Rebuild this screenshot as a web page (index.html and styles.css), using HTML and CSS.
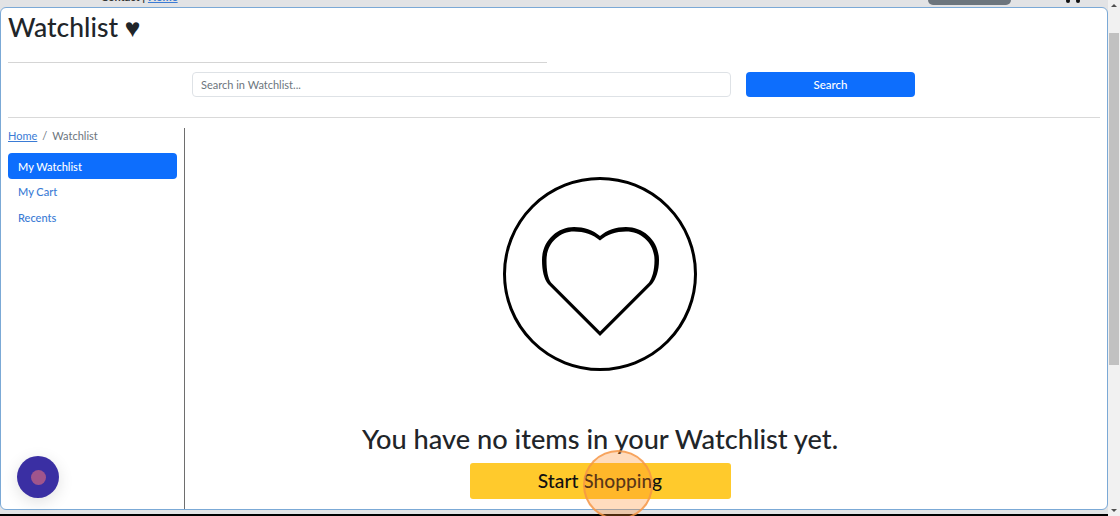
FILE: index.html
```html
<!DOCTYPE html>
<html>
  <head>
    <title>Watchlist</title>
    <link rel="stylesheet" href="styles.css">
  </head>

  <body>
    <div class="window">
      <div class="content">
        <div class="topstrip">
          <div class="contact">Contact | <a href="#">Home</a></div>
          <div class="pill"></div>
          <div class="dots"><span></span><span></span></div>
        </div>

        <div class="frame">
          <h1>Watchlist ♥</h1>
          <div class="title-line"></div>

          <form class="search-row">
            <input type="text" class="search-input" placeholder="Search in Watchlist...">
            <button type="button" class="search-btn">Search</button>
          </form>
          <hr class="divider">

          <div class="columns">
            <aside class="sidebar">
              <div class="breadcrumb">
                <a href="#">Home</a><span class="sep">/</span><span>Watchlist</span>
              </div>
              <nav class="side-nav">
                <a href="#" class="active">My Watchlist</a>
                <a href="#">My Cart</a>
                <a href="#">Recents</a>
              </nav>
            </aside>

            <main class="empty">
              <svg class="empty-icon" width="196" height="196" viewBox="0 0 196 196">
                <circle cx="98" cy="98" r="95.5" fill="none" stroke="#000" stroke-width="3"/>
                <path fill="#000" fill-rule="evenodd" d="M98 160 L46 108 C42 103 40 95 40 84 C40 65 55 51 72 51 C82 51 91 54 98 60 C105 54 114 51 124 51 C142 51 157 65 157 84 C157 95 154 103 150 108 Z M98 155.500 L49 106.500 C46 102 44.500 95 44.500 84 C44.500 68 57 55.500 72 55.500 C82 55.500 91 58.500 98 64.500 C105 58.500 114 55.500 124 55.500 C140 55.500 152.500 68 152.500 84 C152.500 95 150 102 147 106.500 Z"/>
              </svg>
              <h2>You have no items in your Watchlist yet.</h2>
              <button type="button" class="shop-btn">Start Shopping</button>
            </main>
          </div>
        </div>

        <div class="bottom-bar"></div>
      </div>

      <div class="scrollbar">
        <div class="arrow-up"></div>
        <div class="thumb"></div>
        <div class="arrow-down"></div>
      </div>
    </div>

    <div class="chat-bubble"><span></span></div>
    <div class="click-mark"></div>
  </body>
</html>
```

FILE: styles.css
```css
* {
  box-sizing: border-box;
}

html,
body {
  height: 516px;
  margin: 0;
  overflow: hidden;
}

body {
  font-family: Lato, "Open Sans", sans-serif;
  color: #212529;
  background: #fff;
}

a {
  color: #3a7bd5;
}

.window {
  display: flex;
  height: 516px;
}

.content {
  display: flex;
  flex-direction: column;
  width: 1108px;
  background: #e2e3e5;
}

/* page behind the frame, only its bottom edge shows */
.topstrip {
  display: flex;
  align-items: flex-end;
  flex: 0 0 7px;
  height: 7px;
  overflow: hidden;
  font-size: 11px;
  font-weight: 700;
  line-height: 14px;
  color: #333;
}

.contact {
  width: 73px;
  margin-left: 101px;
  margin-bottom: 3px;
  white-space: nowrap;
}

.pill {
  width: 83px;
  height: 12px;
  margin-left: 754px;
  background: #6c757d;
  border-radius: 0 0 5px 5px;
  margin-bottom: 2px;
}

.dots {
  display: flex;
  gap: 6px;
  margin-left: 55px;
  margin-bottom: 4px;
}

.dots span {
  width: 4px;
  height: 4px;
  background: #111;
  border-radius: 50%;
}

.frame {
  display: flex;
  flex-direction: column;
  flex: 0 0 503px;
  padding: 0 7px 0 7px;
  background: #fff;
  border: 1px solid #7ba9d6;
  border-radius: 6px;
  overflow: hidden;
}

h1 {
  margin: 0;
  height: 38px;
  font-size: 26.500px;
  font-weight: 500;
  line-height: 38px;
}

.title-line {
  width: 539px;
  height: 1px;
  margin-top: 16px;
  background: #d5d5d5;
}

.search-row {
  display: flex;
  gap: 15px;
  margin: 9px 0 0 184px;
}

.search-input {
  width: 539px;
  height: 25px;
  padding: 0 8px;
  font-family: inherit;
  font-size: 11px;
  border: 1px solid #dee2e6;
  border-radius: 4px;
}

.search-input::placeholder {
  color: #6c757d;
}

.search-btn {
  width: 169px;
  height: 25px;
  padding: 0;
  font-family: inherit;
  font-size: 11.500px;
  font-weight: 500;
  color: #fff;
  background: #0d6efd;
  border: none;
  border-radius: 4px;
}

.divider {
  width: 1092px;
  height: 1px;
  margin: 20px 0 10px;
  background: #d9d9d9;
  border: none;
}

.columns {
  display: flex;
  flex: 1;
  min-height: 0;
}

.sidebar {
  flex: 0 0 177px;
  border-right: 1px solid #6e6e6e;
}

.breadcrumb {
  display: flex;
  height: 25px;
  font-size: 11px;
  line-height: 15px;
  color: #6c757d;
}

.breadcrumb .sep {
  margin: 0 5px;
}

.side-nav {
  display: flex;
  flex-direction: column;
  width: 169px;
}

.side-nav a {
  height: 25.500px;
  padding: 0 10px;
  font-size: 11px;
  font-weight: 500;
  line-height: 26px;
  color: #3a7bd5;
  text-decoration: none;
  border-radius: 4px;
}

.side-nav a.active {
  height: 26px;
  line-height: 27px;
  color: #fff;
  background: #0d6efd;
}

.empty {
  display: flex;
  flex-direction: column;
  align-items: center;
  width: 830px;
  padding-top: 48px;
}

.empty-icon {
  display: block;
}

.empty h2 {
  margin: 52px 0 0;
  height: 30px;
  font-size: 27.200px;
  font-weight: 500;
  line-height: 30px;
  white-space: nowrap;
}

.shop-btn {
  width: 261px;
  height: 36px;
  margin-top: 9px;
  padding: 0 0 2px;
  font-family: inherit;
  font-size: 19.200px;
  font-weight: 500;
  color: #111;
  background: #ffca2c;
  border: none;
  border-radius: 3px;
}

.bottom-bar {
  flex: 1;
  margin-top: 4px;
  background: #000;
}

.scrollbar {
  position: relative;
  flex: 0 0 12px;
  background: #f1f1f1;
}

.thumb {
  height: 332px;
  margin: 33px 1px 0;
  background: #c1c1c1;
}

.arrow-up,
.arrow-down {
  position: absolute;
  left: 3px;
  width: 0;
  height: 0;
  border-left: 3px solid transparent;
  border-right: 3px solid transparent;
}

.arrow-up {
  top: 4px;
  border-bottom: 3px solid #505050;
}

.arrow-down {
  bottom: 4px;
  border-top: 3px solid #505050;
}

/* recording overlays */
.chat-bubble {
  position: absolute;
  left: 17px;
  top: 456px;
  display: flex;
  align-items: center;
  justify-content: center;
  width: 42px;
  height: 42px;
  background: #3a2fa3;
  border-radius: 50%;
  box-shadow: 0 4px 16px rgba(0, 0, 0, 0.12);
}

.chat-bubble span {
  width: 15px;
  height: 15px;
  background: #a0558c;
  border-radius: 50%;
}

.click-mark {
  position: absolute;
  left: 583px;
  top: 450px;
  width: 70px;
  height: 70px;
  background: rgba(255, 140, 40, 0.3);
  border: 2px solid rgba(245, 150, 70, 0.8);
  border-radius: 50%;
}
```
